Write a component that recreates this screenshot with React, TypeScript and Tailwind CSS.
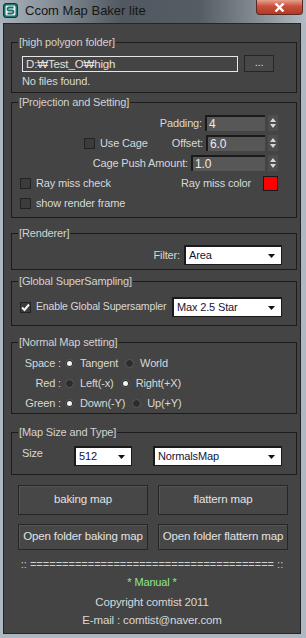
import React from 'react';

function Group({ title, className, children }: { title: string; className: string; children: React.ReactNode }) {
    return (
        <fieldset className={`ml-[7px] w-[286px] border border-[#1c1c1c] ${className}`}>
            <legend className="ml-[6px] px-[1px] text-[11px] leading-[14px] text-[#d2d2d2]">{title}</legend>
            {children}
        </fieldset>
    );
}

function Spinner({ value, w }: { value: string; w: string }) {
    return (
        <div className="flex shrink-0 items-center">
            <div className={`h-[16px] ${w} border-t-2 border-l-2 border-[#1a1a1a] bg-[#575757] pl-[2px] text-[12px] leading-[14px] text-[#ececec]`}>
                {value}
            </div>
            <div className="ml-[3px] flex h-[16px] w-[10px] flex-col items-center justify-center gap-[2px] bg-[#4e4e4e]">
                <svg width="6" height="4" viewBox="0 0 6 4">
                    <path d="M3 0L6 4H0z" fill="#d8d8d8" />
                </svg>
                <svg width="6" height="4" viewBox="0 0 6 4">
                    <path d="M0 0h6L3 4z" fill="#d8d8d8" />
                </svg>
            </div>
        </div>
    );
}

function Dropdown({ value, w }: { value: string; w: string }) {
    return (
        <div className={`flex h-[20px] ${w} shrink-0 items-center justify-between border-t-2 border-l-2 border-r border-b border-[#1a1a1a] bg-white pl-[3px] pr-[6px] text-[11px] text-[#14143a]`}>
            <span>{value}</span>
            <svg width="7" height="4" viewBox="0 0 7 4">
                <path d="M0 0h7L3.5 4z" fill="#111" />
            </svg>
        </div>
    );
}

function Check({ checked = false }: { checked?: boolean }) {
    return (
        <div className="flex h-[11px] w-[11px] items-center justify-center border border-[#222] bg-[#3c3c3c]">
            {checked ? (
                <svg width="9" height="9" viewBox="0 0 9 9">
                    <path d="M1 4.5L3.5 7L8 1.5" stroke="#f2f2f2" strokeWidth="2" fill="none" />
                </svg>
            ) : null}
        </div>
    );
}

function Radio({ on = false }: { on?: boolean }) {
    return (
        <div className="flex h-[9px] w-[9px] items-center justify-center rounded-full border border-[#5a5a5a] bg-[#2c2c2c]">
            {on ? <div className="h-[5px] w-[5px] rounded-full bg-[#f4f4f4]" /> : null}
        </div>
    );
}

function Btn({ label, h }: { label: string; h: string }) {
    return (
        <button className={`${h} w-[130px] border border-[#262626] bg-[#474747] text-[11.5px] text-[#e2e2e2] shadow-[inset_1px_1px_0_#555]`}>
            {label}
        </button>
    );
}

export default function App() {
    return (
        <div className="flex h-[638px] w-[306px] flex-col bg-[#aeb8c2] font-['Liberation_Sans',Arial,sans-serif] text-[11px] tracking-[-0.15px] text-[#d8d8d8]">
            <div className="flex h-[23px] items-start bg-[linear-gradient(to_right,#a9b3bc_0%,#848d96_18%,#51585f_40%,#555c63_65%,#8f989f_88%,#b3bcc4_100%)]">
                <svg className="mt-[3px] ml-[3px]" width="15" height="15" viewBox="0 0 15 15">
                    <rect x="0.5" y="0.5" width="14" height="14" rx="2.5" fill="#1f6f6a" stroke="#0e3a38" />
                    <rect x="2.5" y="2.5" width="10" height="10" rx="1.5" fill="#e8f2f0" />
                    <path d="M10.5 4.5H6a1.5 1.5 0 0 0 0 3h3a1.5 1.5 0 0 1 0 3H4.5" stroke="#1f6f6a" strokeWidth="1.8" fill="none" />
                </svg>
                <span className="mt-[3px] ml-[7px] text-[13px] leading-[16px] tracking-normal text-[#161616]">Ccom Map Baker lite</span>
                <div className="ml-auto mr-[3px] flex h-[15px] w-[47px] items-center justify-center rounded-b-[4px] border border-t-0 border-[#5a2a22] bg-[linear-gradient(to_bottom,#e8a090_0%,#c9503a_45%,#b23a26_100%)]">
                    <svg width="11" height="9" viewBox="0 0 11 9">
                        <path d="M1.5 0.5L9.5 8.5M9.5 0.5L1.5 8.5" stroke="#fff" strokeWidth="2.4" />
                    </svg>
                </div>
            </div>

            <div className="ml-[3px] flex h-[611px] w-[298px] flex-col border border-[#262626] bg-[#444444]">
                <Group title="[high polygon folder]" className="mt-[11px] h-[58px]">
                    <div className="mt-[6px] ml-[10px] flex items-center gap-[6px]">
                        <div className="h-[16px] w-[216px] border border-[#e6e6e6] bg-[#444] pl-[3px] text-[11.5px] leading-[14px] text-[#e0e0e0]">
                            D:₩Test_O₩high
                        </div>
                        <div className="flex h-[17px] w-[30px] items-center justify-center border border-[#262626] bg-[#474747] pb-[3px] text-[11px] text-[#ddd]">
                            ...
                        </div>
                    </div>
                    <div className="mt-[2px] ml-[10px] leading-[14px]">No files found.</div>
                </Group>

                <Group title="[Projection and Setting]" className="mt-[2px] h-[123px]">
                    <div className="mt-[6px] flex h-[16px] items-center justify-end pr-[18px]">
                        <span className="mr-[3px]">Padding:</span>
                        <Spinner value="4" w="w-[60px]" />
                    </div>
                    <div className="mt-[4px] flex h-[16px] items-center pr-[18px]">
                        <div className="ml-[72px]">
                            <Check />
                        </div>
                        <span className="ml-[5px]">Use Cage</span>
                        <span className="mr-[3px] ml-auto">Offset:</span>
                        <Spinner value="6.0" w="w-[59px]" />
                    </div>
                    <div className="mt-[4px] flex h-[16px] items-center justify-end pr-[18px]">
                        <span className="mr-[3px]">Cage Push Amount:</span>
                        <Spinner value="1.0" w="w-[74px]" />
                    </div>
                    <div className="mt-[5px] flex h-[15px] items-center pr-[18px]">
                        <div className="ml-[8px]">
                            <Check />
                        </div>
                        <span className="ml-[5px]">Ray miss check</span>
                        <span className="mr-[12px] ml-auto">Ray miss color</span>
                        <div className="h-[15px] w-[15px] border border-[#1a1a1a] bg-[#ff0000]" />
                    </div>
                    <div className="mt-[5px] flex h-[14px] items-center">
                        <div className="ml-[8px]">
                            <Check />
                        </div>
                        <span className="ml-[5px]">show render frame</span>
                    </div>
                </Group>

                <Group title="[Renderer]" className="mt-[8px] h-[44px]">
                    <div className="mt-[5px] flex items-center justify-end pr-[14px]">
                        <span className="mr-[4px]">Filter:</span>
                        <Dropdown value="Area" w="w-[98px]" />
                    </div>
                </Group>

                <Group title="[Global SuperSampling]" className="mt-[4px] h-[52px]">
                    <div className="mt-[9px] flex items-center pr-[14px]">
                        <div className="ml-[8px]">
                            <Check checked />
                        </div>
                        <span className="ml-[5px] min-w-0 whitespace-nowrap text-[10.5px]">Enable Global Supersampler</span>
                        <div className="ml-auto">
                            <Dropdown value="Max 2.5 Star" w="w-[110px]" />
                        </div>
                    </div>
                </Group>

                <Group title="[Normal Map setting]" className="mt-[9px] h-[79px]">
                    <div className="mt-[4px] flex h-[20px] items-center">
                        <span className="w-[49px] text-right">Space :</span>
                        <div className="ml-[4px]"><Radio on /></div>
                        <span className="ml-[6px]">Tangent</span>
                        <div className="ml-[7px]"><Radio /></div>
                        <span className="ml-[6px]">World</span>
                    </div>
                    <div className="flex h-[20px] items-center">
                        <span className="w-[49px] text-right">Red :</span>
                        <div className="ml-[4px]"><Radio /></div>
                        <span className="ml-[6px]">Left(-x)</span>
                        <div className="ml-[7px]"><Radio on /></div>
                        <span className="ml-[6px]">Right(+X)</span>
                    </div>
                    <div className="flex h-[20px] items-center">
                        <span className="w-[49px] text-right">Green :</span>
                        <div className="ml-[4px]"><Radio on /></div>
                        <span className="ml-[6px]">Down(-Y)</span>
                        <div className="ml-[7px]"><Radio /></div>
                        <span className="ml-[6px]">Up(+Y)</span>
                    </div>
                </Group>

                <Group title="[Map Size and Type]" className="mt-[11px] h-[50px]">
                    <div className="mt-[7px] flex items-start">
                        <span className="ml-[10px] w-[52px] leading-[14px]">Size</span>
                        <Dropdown value="512" w="w-[58px]" />
                        <div className="ml-[21px]">
                            <Dropdown value="NormalsMap" w="w-[129px]" />
                        </div>
                    </div>
                </Group>

                <div className="mt-[10px] ml-[14px] flex gap-[10px]">
                    <Btn label="baking map" h="h-[30px]" />
                    <Btn label="flattern map" h="h-[30px]" />
                </div>
                <div className="mt-[9px] ml-[14px] flex gap-[10px]">
                    <Btn label="Open folder baking map" h="h-[26px]" />
                    <Btn label="Open folder flattern map" h="h-[26px]" />
                </div>

                <div className="mt-[5px] text-center leading-[18px] tracking-normal text-[#d0d0d0]">
                    :: ====================================== ::
                </div>
                <div className="text-center leading-[18px] text-[#8ce88c]">* Manual *</div>
                <div className="mt-[2px] text-center text-[11.5px] leading-[18px]">Copyright comtist 2011</div>
                <div className="text-center text-[11.5px] leading-[18px]">E-mail : comtist@naver.com</div>
            </div>
        </div>
    );
}
